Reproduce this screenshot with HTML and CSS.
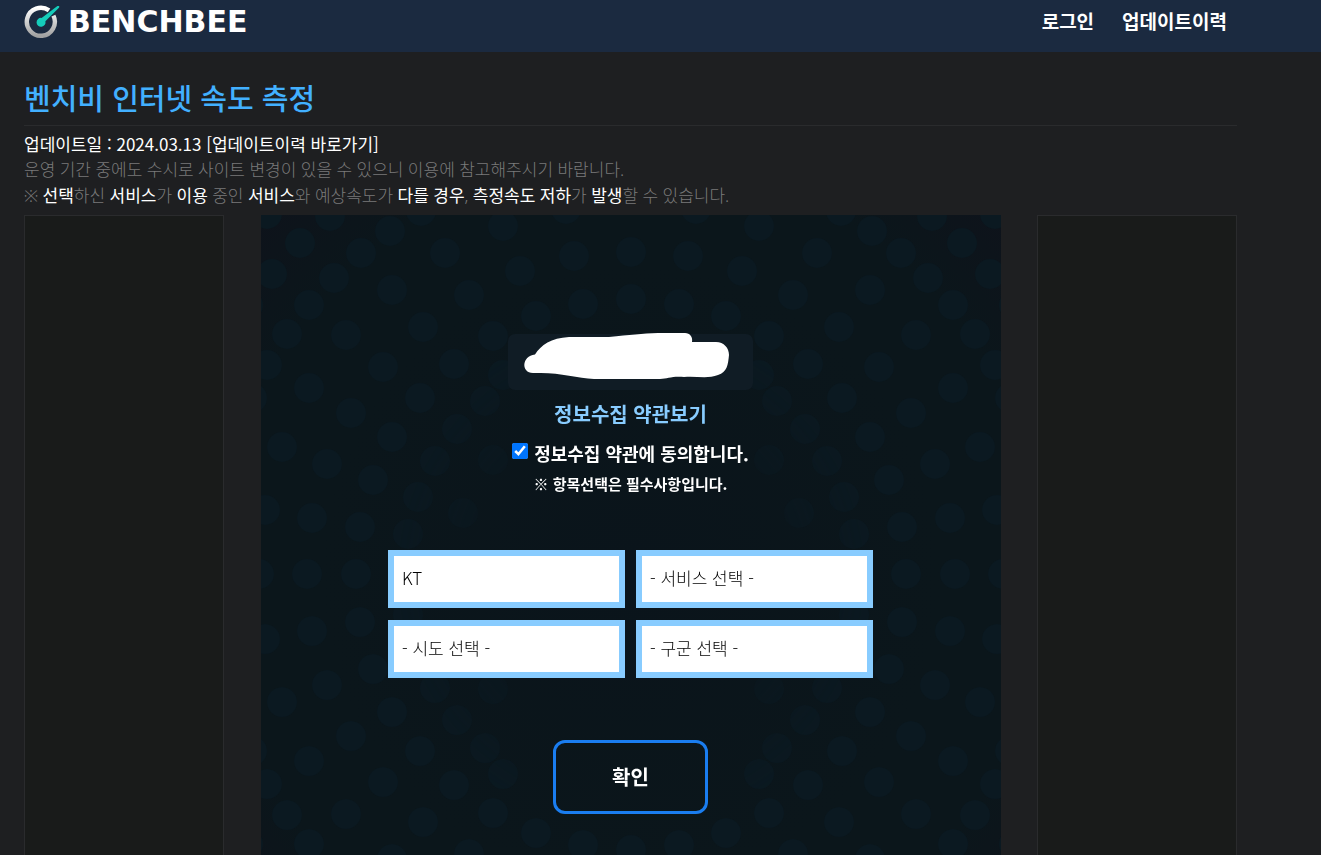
FILE: index.html
```html
<!DOCTYPE html>
<html lang="ko">
<head>
<meta charset="utf-8">
<title>벤치비 인터넷 속도 측정</title>
<link rel="stylesheet" href="styles.css">
</head>
<body>
<header class="topbar">
  <a class="brand" href="#" aria-label="BENCHBEE">
    <svg class="brand-mark" viewBox="0 0 36 34" aria-hidden="true">
      <defs><linearGradient id="ring" x1="0" y1="0" x2="0" y2="1"><stop offset="0" stop-color="#fff"/><stop offset="1" stop-color="#a2a2a2"/></linearGradient></defs>
      <path d="M25 5.400A14 14 0 1 0 29.400 10.600" fill="none" stroke="url(#ring)" stroke-width="4.400"/>
      <path d="M33.400 1H35.200V2.600L21.400 16.200A4.500 4.500 0 1 1 17.600 12.900Z" fill="#15ccba"/>
    </svg>
    <span class="brand-name">BENCHBEE</span>
  </a>
  <nav class="menu">
    <a href="#">로그인</a>
    <a href="#">업데이트이력</a>
  </nav>
</header>
<main class="page">
  <h1 class="title">벤치비 인터넷 속도 측정</h1>
  <div class="notice">
    <p class="bright">업데이트일 : 2024.03.13 <a href="#">[업데이트이력 바로가기]</a></p>
    <p>운영 기간 중에도 수시로 사이트 변경이 있을 수 있으니 이용에 참고해주시기 바랍니다.</p>
    <p>※ <b>선택</b>하신 <b>서비스</b>가 <b>이용</b> 중인 <b>서비스</b>와 예상속도가 <b>다를 경우</b>, <b>측정속도 저하</b>가 <b>발생</b>할 수 있습니다.</p>
  </div>
  <div class="columns">
    <aside class="side"></aside>
    <section class="panel">
      <svg class="dots" viewBox="0 0 740 719" aria-hidden="true">
        <defs>
          <radialGradient id="fade" gradientUnits="userSpaceOnUse" cx="370" cy="360" r="400"><stop offset=".2" stop-color="#fff" stop-opacity=".1"/><stop offset=".65" stop-color="#fff"/></radialGradient>
          <mask id="dot-mask" maskUnits="userSpaceOnUse" x="0" y="0" width="740" height="719"><rect width="740" height="719" fill="url(#fade)"/></mask>
          <g id="quarter">
            <circle cx="6" cy="-1" r="15"/><circle cx="69" cy="1" r="15"/><circle cx="129" cy="16" r="15"/><circle cx="160" cy="-4" r="15"/><circle cx="242" cy="11" r="15"/><circle cx="305" cy="-6" r="15"/>
            <circle cx="39" cy="28" r="15"/><circle cx="100" cy="38" r="15"/><circle cx="184" cy="38" r="15"/><circle cx="313" cy="41" r="15"/><circle cx="11" cy="59" r="15"/><circle cx="73" cy="63" r="15"/>
            <circle cx="259" cy="56" r="15"/><circle cx="131" cy="75" r="15"/><circle cx="208" cy="80" r="15"/><circle cx="48" cy="90" r="15"/><circle cx="322" cy="89" r="15"/><circle cx="275" cy="101" r="15"/>
            <circle cx="-13" cy="90" r="15"/><circle cx="162" cy="112" r="15"/><circle cx="26" cy="119" r="15"/><circle cx="85" cy="120" r="15"/><circle cx="232" cy="121" r="15"/><circle cx="6" cy="150" r="15"/>
            <circle cx="122" cy="152" r="15"/><circle cx="193" cy="149" r="15"/><circle cx="242" cy="160" r="15"/><circle cx="48" cy="173" r="15"/><circle cx="159" cy="183" r="15"/><circle cx="-9" cy="183" r="15"/>
            <circle cx="224" cy="186" r="15"/><circle cx="90" cy="198" r="15"/><circle cx="196" cy="214" r="15"/><circle cx="131" cy="222" r="15"/><circle cx="21" cy="232" r="15"/><circle cx="66" cy="249" r="15"/>
            <circle cx="174" cy="246" r="15"/><circle cx="232" cy="245" r="15"/><circle cx="112" cy="265" r="15"/><circle cx="157" cy="282" r="15"/><circle cx="202" cy="298" r="15"/><circle cx="4" cy="295" r="15"/>
            <circle cx="51" cy="303" r="15"/><circle cx="99" cy="312" r="15"/><circle cx="147" cy="319" r="15"/>
          </g>
          <g id="half">
            <use href="#quarter"/><use href="#quarter" transform="matrix(1 0 0 -1 0 719)"/>
            <circle cx="-2" cy="359" r="15"/><circle cx="46" cy="359" r="15"/><circle cx="95" cy="359" r="15"/>
          </g>
        </defs>
        <g class="dot-fill" mask="url(#dot-mask)">
          <use href="#half"/><use href="#half" transform="matrix(-1 0 0 1 740 0)"/>
          <circle cx="370" cy="37" r="15"/><circle cx="370" cy="84" r="15"/><circle cx="370" cy="635" r="15"/>
        </g>
      </svg>
      <form class="survey" onsubmit="return false">
        <div class="address">
          <svg viewBox="0 0 245 56" aria-hidden="true"><path fill="#fff" d="M27 20.500C33 11 43 4 61 3H101C122 1 134-.5 150-1H177C182-1 185 3 184 8H208C216 8 221 14 221 21 220 31 219 38 210 41 200 45 189 42 176 43 163 42 160 45 152 45H86C70 44 53 39 33 39H26C13 40 13 22 27 20.500Z"/></svg>
        </div>
        <a class="terms" href="#">정보수집 약관보기</a>
        <div class="agree"><input type="checkbox" id="agree" checked><label for="agree">정보수집 약관에 동의합니다.</label></div>
        <p class="required">※ 항목선택은 필수사항입니다.</p>
        <div class="fields">
          <select aria-label="통신사 선택"><option>KT</option></select>
          <select aria-label="서비스 선택"><option>- 서비스 선택 -</option></select>
          <select aria-label="시도 선택"><option>- 시도 선택 -</option></select>
          <select aria-label="구군 선택"><option>- 구군 선택 -</option></select>
        </div>
        <button class="confirm" type="submit">확인</button>
      </form>
    </section>
    <aside class="side"></aside>
  </div>
</main>
</body>
</html>
```
FILE: styles.css
```css
* { box-sizing: border-box; }
body {
  margin: 0;
  min-height: 100vh;
  display: flex;
  flex-direction: column;
  background: #1e1f21;
  color: #fff;
  font: 17px/26px "Noto Sans CJK KR", "Noto Sans", sans-serif;
}
a { color: inherit; text-decoration: none; }
p { margin: 0; }
.topbar {
  height: 52px;
  padding: 0 94px 8px 24px;
  display: flex;
  align-items: center;
  justify-content: space-between;
  background: #1b2a40;
}
.brand { display: flex; align-items: center; gap: 8px; }
.brand-mark { width: 36px; height: 34px; }
.brand-name { font: bold 30px/34px "DejaVu Sans", sans-serif; }
.menu { display: flex; gap: 28px; padding-bottom: 2px; font-size: 19px; font-weight: 700; line-height: 28px; }
.page { flex: 1; display: flex; flex-direction: column; margin: 0 84px 0 24px; }
.title {
  margin: 0;
  padding: 25px 0 8px;
  border-bottom: 1px solid #2a2b2d;
  color: #42b0ff;
  font-size: 29px;
  line-height: 40px;
  font-weight: 500;
}
.notice { padding: 5px 0 6px; color: #7a7a7a; font-family: "Noto Sans", "Noto Sans CJK KR", sans-serif; font-weight: 300; }
.notice .bright { color: #fff; font-family: "Noto Sans CJK KR", sans-serif; font-weight: 400; }
.notice b { color: #fff; font-weight: 400; }
.columns { flex: 1; display: flex; justify-content: space-between; gap: 24px; }
.side { width: 200px; border: 1px solid #2a2b2d; border-bottom: 0; background: #191b1a; }
.panel {
  position: relative;
  width: 740px;
  overflow: hidden;
  background: radial-gradient(circle at 370px 360px, #0a141b, #0b161b 60%, #0b161b 80%, #0e131b);
}
.dots { position: absolute; top: 0; left: 0; width: 740px; height: 719px; }
.dot-fill { fill: #0b1921; }
.survey {
  position: relative;
  padding: 119px 24px 40px;
  display: flex;
  flex-direction: column;
  align-items: center;
}
.address { width: 245px; height: 56px; border-radius: 7px; background: #101c25; }
.address svg { display: block; width: 100%; height: 100%; overflow: visible; }
.terms { margin-top: 10px; color: #88ccff; font-size: 20px; line-height: 28px; font-weight: 700; }
.agree { display: flex; align-items: center; gap: 6px; margin-top: 11px; font-size: 18px; line-height: 28px; font-weight: 700; }
.agree input { width: 16px; height: 16px; margin: 0 0 4px; }
.required { margin-top: 4px; font-size: 15px; line-height: 26px; font-weight: 700; }
.fields { width: 485px; margin-top: 53px; display: grid; grid-template-columns: 1fr 1fr; gap: 12px 11px; }
.fields select {
  appearance: none;
  height: 58px;
  padding: 0 8px 2px;
  border: 6px solid #88ccff;
  border-radius: 0;
  background: #fff;
  color: #000;
  font: inherit;
  font-weight: 300;
}
.confirm {
  width: 155px;
  height: 74px;
  margin-top: 62px;
  border: 3px solid #1a7df0;
  border-radius: 12px;
  background: transparent;
  color: #fff;
  font: inherit;
  font-size: 20px;
  font-weight: 700;
}
```
